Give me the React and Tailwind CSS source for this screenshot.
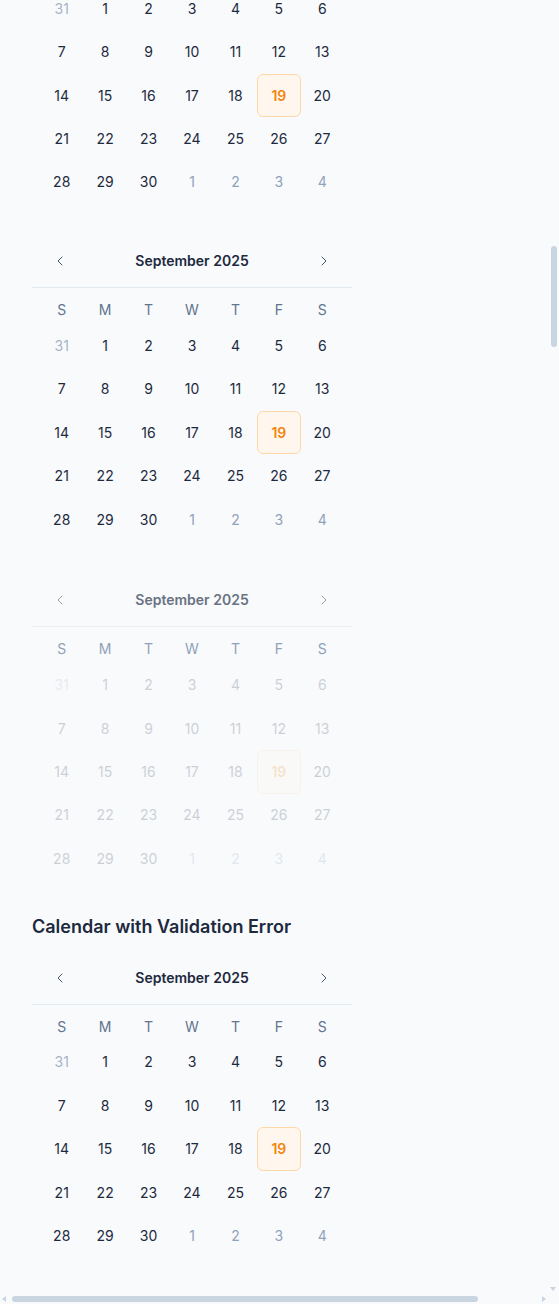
import React, { useLayoutEffect, useRef } from 'react';
import { ChevronLeft, ChevronRight } from 'lucide-react';

const WEEKDAYS = ['S', 'M', 'T', 'W', 'T', 'F', 'S'];

const DAYS = [
  { n: 31, out: true },
  ...Array.from({ length: 30 }, (_, i) => ({ n: i + 1 })),
  ...Array.from({ length: 4 }, (_, i) => ({ n: i + 1, out: true })),
];

const Calendar = React.forwardRef(function Calendar({ disabled, className = '' }, ref) {
  return (
    <div ref={ref} className={`w-80 ${className}`}>
      <div className={`flex items-center justify-between border-b px-3 pb-2.5 ${disabled ? 'border-slate-200/70' : 'border-slate-200'}`}>
        <button className={`flex h-8 w-8 items-center justify-center ${disabled ? 'text-gray-400' : 'text-slate-600'}`}>
          <ChevronLeft className="h-4 w-4" strokeWidth={1.5} />
        </button>
        <span className={`text-sm font-semibold ${disabled ? 'text-gray-500' : 'text-slate-800'}`}>September 2025</span>
        <button className={`flex h-8 w-8 items-center justify-center ${disabled ? 'text-gray-400' : 'text-slate-600'}`}>
          <ChevronRight className="h-4 w-4" strokeWidth={1.5} />
        </button>
      </div>
      <div className="px-2">
        <div className={`mt-2 grid h-7 grid-cols-7 items-center text-center text-sm ${disabled ? 'text-slate-400' : 'text-slate-500'}`}>
          {WEEKDAYS.map((d, i) => (
            <span key={i}>{d}</span>
          ))}
        </div>
        <div className={`grid grid-cols-7 ${disabled ? 'opacity-20' : ''}`}>
          {DAYS.map((d, i) => {
            const selected = !d.out && d.n === 19;
            return (
              <div key={i} className="flex aspect-square items-center justify-center">
                <span
                  className={`flex h-full w-full items-center justify-center rounded-md text-sm ${
                    selected
                      ? 'border border-orange-200 bg-orange-50 font-semibold text-[#f0850f]'
                      : d.out
                      ? i === 0
                        ? 'text-slate-400/80'
                        : 'text-slate-400'
                      : 'text-slate-800'
                  }`}
                >
                  {d.n}
                </span>
              </div>
            );
          })}
        </div>
      </div>
    </div>
  );
});

export default function App() {
  const scroller = useRef(null);
  const target = useRef(null);

  // open the page scrolled down to the second calendar
  useLayoutEffect(() => {
    const box = scroller.current;
    const el = target.current;
    if (!box || !el) return;
    const top = el.getBoundingClientRect().top - box.getBoundingClientRect().top + box.scrollTop;
    box.scrollTop = top - 245;
  }, []);

  return (
    <div className="relative h-[1304px] bg-slate-50" style={{ fontFamily: 'Inter, "Noto Sans", sans-serif' }}>
      <div ref={scroller} className="h-full overflow-auto">
        <div className="min-w-[636px] px-8 pt-8 pb-24">
          <h2 className="mb-[22px] text-lg font-semibold text-slate-800">Calendar States</h2>
          <Calendar className="mb-[41px]" />
          <div className="flex flex-col gap-[43px]">
            <Calendar ref={target} />
            <Calendar disabled />
          </div>
          <h2 className="mt-8 mb-[21px] text-lg font-semibold text-slate-800">Calendar with Validation Error</h2>
          <Calendar />
        </div>
      </div>

      {/* scrollbars */}
      <div className="absolute top-[246px] right-[2px] h-[101px] w-[6px] rounded-full bg-slate-300" />
      <div className="absolute top-[1287px] right-[3px] h-0 w-0 border-x-[3px] border-t-[4px] border-x-transparent border-t-slate-300" />
      <div className="absolute bottom-[2px] left-[12px] h-[6px] w-[466px] rounded-full bg-slate-300" />
      <div className="absolute bottom-[2px] left-[2px] h-0 w-0 border-y-[3px] border-r-[4px] border-y-transparent border-r-slate-300" />
      <div className="absolute bottom-[2px] left-[542px] h-0 w-0 border-y-[3px] border-l-[4px] border-y-transparent border-l-slate-300" />
    </div>
  );
}
